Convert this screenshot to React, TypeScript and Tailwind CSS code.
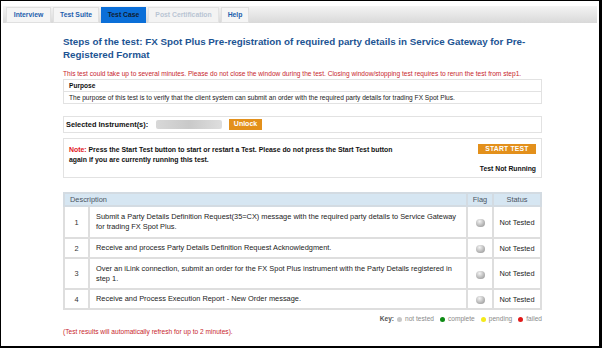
const TABS = [
  { label: 'Interview', w: 'w-[45px]', state: 'normal' },
  { label: 'Test Suite', w: 'w-[46px]', state: 'normal' },
  { label: 'Test Case', w: 'w-[45px]', state: 'active' },
  { label: 'Post Certification', w: 'w-[71px]', state: 'disabled' },
  { label: 'Help', w: 'w-[28px]', state: 'normal' },
]

const STEPS = [
  {
    n: 1,
    text: 'Submit a Party Details Definition Request(35=CX) message with the required party details to Service Gateway for trading FX Spot Plus.',
    h: 'h-[32px]',
  },
  { n: 2, text: 'Receive and process Party Details Definition Request Acknowledgment.', h: 'h-[20px]' },
  {
    n: 3,
    text: 'Over an iLink connection, submit an order for the FX Spot Plus instrument with the Party Details registered in step 1.',
    h: 'h-[31px]',
  },
  { n: 4, text: 'Receive and Process Execution Report - New Order message.', h: 'h-[20px]' },
]

function Ball() {
  return (
    <span className="inline-block w-[9px] h-[8px] rounded-full bg-[radial-gradient(circle_at_40%_30%,#f4f4f4,#b5b5b5_60%,#8f8f8f)]" />
  )
}

function Dot({ color }: { color: string }) {
  return <span className={`inline-block w-[5px] h-[5px] rounded-full ${color}`} />
}

export default function App() {
  return (
    <div
      className="w-[602px] h-[348px] bg-white border-l border-t border-r-[3px] border-b-2 border-black overflow-hidden"
      style={{ fontFamily: '"Liberation Sans", Arial, sans-serif' }}
    >
      {/* tab bar */}
      <div className="mt-[5px] ml-[2px] mr-[2px] h-[17px] bg-gradient-to-b from-[#f4f4f4] to-[#d9d9d9] flex items-end gap-[2px] pl-[3px]">
        {TABS.map((t) => (
          <div
            key={t.label}
            className={`${t.w} h-[16px] flex items-center justify-center text-[6.8px] font-bold border ${
              t.state === 'active'
                ? 'bg-[#0b6fd8] border-[#0b6fd8] text-[#0f1d33]'
                : t.state === 'disabled'
                ? 'bg-[#f3f3f3] border-[#e3e3e3] text-[#b9c5d3]'
                : 'bg-[#f5f5f5] border-[#e0e0e0] text-[#1e5fae]'
            }`}
          >
            {t.label}
          </div>
        ))}
      </div>

      <div className="ml-[62px] w-[479px]">
        <h1 className="mt-[13px] text-[9.8px] leading-[12.5px] font-bold text-[#1d5493]">
          Steps of the test: FX Spot Plus Pre-registration of required party details in Service Gateway for Pre-Registered Format
        </h1>
        <p className="mt-[8px] text-[6.6px] leading-[9px] text-[#c8272e]">
          This test could take up to several minutes. Please do not close the window during the test. Closing window/stopping test requires to rerun the test from step1.
        </p>

        {/* purpose */}
        <div className="mt-[1px] border border-[#e2e2e2] text-[6.6px] leading-[11px]">
          <div className="px-[5px] font-bold text-[#111] border-b border-[#e2e2e2]">Purpose</div>
          <div className="px-[5px] text-[#222]">
            The purpose of this test is to verify that the client system can submit an order with the required party details for trading FX Spot Plus.
          </div>
        </div>

        {/* instrument */}
        <div className="mt-[12px] h-[17px] border border-[#e2e2e2] flex items-center pl-[2px] gap-[6px]">
          <span className="text-[7.4px] font-bold text-[#111] w-[84px]">Selected Instrument(s):</span>
          <span className="w-[66px] h-[9px] bg-gradient-to-r from-[#d8d8d8] via-[#c9c9c9] to-[#dedede] rounded-[2px]" />
          <span className="ml-[1px] w-[33px] h-[11px] bg-[#e3901b] text-white text-[7px] font-bold flex items-center justify-center">
            Unlock
          </span>
        </div>

        {/* note */}
        <div className="mt-[5px] h-[40px] border border-[#e2e2e2] flex pl-[5px] pr-[5px] pt-[5px] pb-[3px]">
          <div className="w-[330px] pt-[1px] text-[6.9px] leading-[9.5px] font-bold text-[#111]">
            <span className="text-[#e1161c]">Note:</span> Press the Start Test button to start or restart a Test. Please do not press the Start Test button again if you are currently running this test.
          </div>
          <div className="flex-1 flex flex-col items-end justify-between">
            <span className="w-[58px] h-[10px] bg-[#e3901b] text-white text-[6.8px] font-bold flex items-center justify-center tracking-[0.2px]">
              START TEST
            </span>
            <span className="text-[6.8px] font-bold text-[#111]">Test Not Running</span>
          </div>
        </div>

        {/* steps table */}
        <table className="mt-[14px] w-full border-collapse text-[7.4px] text-[#222]">
          <thead>
            <tr className="h-[13px] bg-[#d6e6f2] text-[#4a5562]">
              <th colSpan={2} className="text-left font-normal px-[5px] border-2 border-[#d3dbe2]">Description</th>
              <th className="w-[26px] font-normal border-2 border-[#d3dbe2]">Flag</th>
              <th className="w-[48px] font-normal border-2 border-[#d3dbe2]">Status</th>
            </tr>
          </thead>
          <tbody>
            {STEPS.map((s) => (
              <tr key={s.n} className={s.h}>
                <td className="w-[25px] text-center border-2 border-[#dedede] text-[#333]">{s.n}</td>
                <td className="px-[6px] leading-[10px] border-2 border-[#dedede]">{s.text}</td>
                <td className="text-center border-2 border-[#dedede] align-middle">
                  <div className="flex justify-center items-center pt-[2px]">
                    <Ball />
                  </div>
                </td>
                <td className="text-center border-2 border-[#dedede]">Not Tested</td>
              </tr>
            ))}
          </tbody>
        </table>

        {/* key */}
        <div className="mt-[4px] flex justify-end items-center gap-[3px] text-[6.6px] text-[#8a8a8a]">
          <span className="font-bold text-[#555]">Key:</span>
          <Dot color="bg-[#c8c8c8]" />
          <span className="mr-[3px]">not tested</span>
          <Dot color="bg-[#0d8a14]" />
          <span className="mr-[3px]">complete</span>
          <Dot color="bg-[#f4ea1a]" />
          <span className="mr-[3px]">pending</span>
          <Dot color="bg-[#e11a1a]" />
          <span>failed</span>
        </div>

        <p className="mt-[3px] text-[6.6px] text-[#c8272e]">(Test results will automatically refresh for up to 2 minutes).</p>
      </div>
    </div>
  )
}
